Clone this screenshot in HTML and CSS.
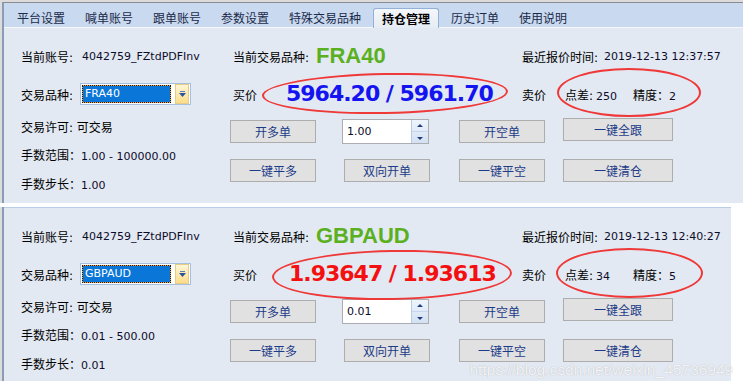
FILE: index.html
```html
<!DOCTYPE html>
<html lang="zh">
<head>
<meta charset="utf-8">
<title>持仓管理</title>
<link rel="stylesheet" href="styles.css">
</head>
<body>
<div class="win">
  <div class="p1">
    <div class="frame">
      <div class="tabs">
        <div class="tab">平台设置</div>
        <div class="tab">喊单账号</div>
        <div class="tab">跟单账号</div>
        <div class="tab">参数设置</div>
        <div class="tab">特殊交易品种</div>
        <div class="tab active">持仓管理</div>
        <div class="tab">历史订单</div>
        <div class="tab">使用说明</div>
      </div>
      <div class="content c-top">
        <div class="row r1">
          <div class="cell"><span class="lbl w61">当前账号:</span><span class="val">4042759_FZtdPDFInv</span></div>
          <div class="cell"><span class="lbl w83">当前交易品种:</span><span class="sym">FRA40</span></div>
          <div class="cell"><span class="lbl w82">最近报价时间:</span><span class="val">2019-12-13 12:37:57</span></div>
        </div>
        <div class="row r2">
          <div class="cell"><span class="lbl w59">交易品种:</span>
            <div class="combo"><div class="sel">FRA40</div><div class="drop"><svg width="7" height="6" viewBox="0 0 7 6"><rect x="1" y="0" width="5" height="1" fill="#5a7fb8"/><path d="M0 2h7L3.5 6z" fill="#2a54a0"/></svg></div></div>
          </div>
          <div class="cell"><span class="lbl w53">买价</span><span class="price blue">5964.20 / 5961.70</span></div>
          <div class="cell"><span class="lbl w43">卖价</span><span class="lbl w68">点差:<span class="val sp">250</span></span><span class="lbl">精度：<span class="val">2</span></span></div>
        </div>
        <div class="lower">
          <div class="info">
            <div>交易许可: 可交易</div>
            <div>手数范围：<span class="val">1.00 - 100000.00</span></div>
            <div>手数步长：<span class="val">1.00</span></div>
          </div>
          <div class="actions">
            <div class="btn">开多单</div>
            <div class="spin"><div class="num">1.00</div><div class="arrows"><span class="up"></span><span class="dn"></span></div></div>
            <div class="btn">开空单</div>
            <div class="btn wide raise">一键全跟</div>
            <div class="btn">一键平多</div>
            <div class="btn">双向开单</div>
            <div class="btn">一键平空</div>
            <div class="btn wide">一键清仓</div>
          </div>
        </div>
      </div>
    </div>
  </div>

  <div class="p2">
    <div class="frame">
      <div class="content c-bot">
        <div class="row r1">
          <div class="cell"><span class="lbl w61">当前账号:</span><span class="val">4042759_FZtdPDFInv</span></div>
          <div class="cell"><span class="lbl w83">当前交易品种:</span><span class="sym">GBPAUD</span></div>
          <div class="cell"><span class="lbl w82">最近报价时间:</span><span class="val">2019-12-13 12:40:27</span></div>
        </div>
        <div class="row r2">
          <div class="cell"><span class="lbl w59">交易品种:</span>
            <div class="combo"><div class="sel">GBPAUD</div><div class="drop"><svg width="7" height="6" viewBox="0 0 7 6"><rect x="1" y="0" width="5" height="1" fill="#5a7fb8"/><path d="M0 2h7L3.5 6z" fill="#2a54a0"/></svg></div></div>
          </div>
          <div class="cell"><span class="lbl w56">买价</span><span class="price red">1.93647 / 1.93613</span></div>
          <div class="cell"><span class="lbl w43">卖价</span><span class="lbl w68">点差:<span class="val sp">34</span></span><span class="lbl">精度：<span class="val">5</span></span></div>
        </div>
        <div class="lower">
          <div class="info">
            <div>交易许可: 可交易</div>
            <div>手数范围：<span class="val">0.01 - 500.00</span></div>
            <div>手数步长：<span class="val">0.01</span></div>
          </div>
          <div class="actions">
            <div class="btn">开多单</div>
            <div class="spin"><div class="num">0.01</div><div class="arrows"><span class="up"></span><span class="dn"></span></div></div>
            <div class="btn">开空单</div>
            <div class="btn wide raise">一键全跟</div>
            <div class="btn">一键平多</div>
            <div class="btn">双向开单</div>
            <div class="btn">一键平空</div>
            <div class="btn wide">一键清仓</div>
          </div>
        </div>
      </div>
    </div>
  </div>

  <div class="ring ring-a"></div>
  <div class="ring ring-b"></div>
  <div class="ring ring-c"></div>
  <div class="ring ring-d"></div>
  <div class="watermark">https://blog.csdn.net/weixin_45736949</div>
</div>
</body>
</html>
```

FILE: styles.css
```css
html, body {
  margin: 0;
  padding: 0;
  background: #ffffff;
}
body {
  font-family: "DejaVu Sans", "Noto Sans CJK SC", sans-serif;
  font-size: 12px;
  color: #000;
}
.win {
  position: relative;
  width: 743px;
  height: 388px;
  overflow: hidden;
  background: #fff;
}

/* outer frames */
.p1 {
  background: #dcdcdc;
  padding: 2px 0 0 2px;
}
.p1 .frame {
  border-top: 1px solid #8c8c8c;
  border-left: 2px solid #8a9cb6;
  background: #c9d9ef;
}
.p2 {
  margin-top: 4px;
  width: 729px;
  padding-left: 2px;
  background: #dcdcdc;
}
.p2 .frame {
  border-left: 2px solid #8a9cb6;
}

/* tabs */
.tabs {
  display: flex;
  align-items: flex-end;
  height: 24px;
  padding-left: 3px;
  font-family: "Noto Sans CJK SC", sans-serif;
  font-size: 12px;
  color: #1b2a4a;
}
.tab {
  height: 19px;
  line-height: 19px;
  padding: 0 10px;
  white-space: nowrap;
}
.tab.active {
  position: relative;
  top: 1px;
  height: 19px;
  padding: 0 8px;
  margin: 0 2px;
  background: linear-gradient(#f4f7fb, #e6ecf4);
  border: 1px solid #93b0d6;
  border-bottom: none;
  border-radius: 3px 3px 0 0;
  font-weight: bold;
  color: #000;
}

/* content area */
.content {
  box-sizing: border-box;
  background: #e3e9f2;
  border-top: 1px solid #f6f8fb;
  padding: 18px 0 0 17px;
  overflow: hidden;
}
.c-top { height: 176px; }
.c-bot {
  height: 174px;
  border-top: 1px solid #b9cde8;
}

.row {
  display: grid;
  grid-template-columns: 212px 289px 1fr;
  align-items: center;
  white-space: nowrap;
}
.cell {
  display: flex;
  align-items: center;
}
.r1 { height: 20px; }
.r2 { height: 22px; margin-top: 17px; }

.lbl {
  font-family: "DejaVu Sans", "Noto Sans CJK SC", sans-serif;
  font-size: 12px;
  display: inline-block;
}
.lbl, .info { letter-spacing: 0; }
.w43 { width: 43px; }
.w53 { width: 53px; }
.w56 { width: 56px; }
.w59 { width: 59px; }
.w61 { width: 61px; }
.w68 { width: 68px; }
.w82 { width: 82px; }
.w83 { width: 83px; }

.val {
  font-family: "DejaVu Sans", sans-serif;
  font-size: 11px;
  color: #0c0c2a;
}
.val.sp { margin-left: 3px; }

.sym {
  font-family: "Liberation Sans", sans-serif;
  font-weight: bold;
  font-size: 22px;
  color: #5bb01f;
  line-height: 20px;
}
.price {
  font-family: "DejaVu Sans", sans-serif;
  font-weight: bold;
  font-size: 22px;
  letter-spacing: -1px;
  line-height: 22px;
}
.price.blue { color: #1414f0; }
.price.red { color: #f41010; }

/* combobox */
.combo {
  box-sizing: border-box;
  width: 111px;
  height: 22px;
  border: 1px solid #a6c0e2;
  background: #fff;
  padding: 1px;
  display: flex;
}
.sel {
  box-sizing: border-box;
  width: 90px;
  height: 18px;
  border: 1px dotted #2a1800;
  background: linear-gradient(#0a76d8, #0a76d8) padding-box, #e9a23a border-box;
  color: #fff;
  font-family: "DejaVu Sans", sans-serif;
  font-size: 11px;
  line-height: 16px;
  padding-left: 2px;
}
.drop {
  box-sizing: border-box;
  width: 14px;
  height: 20px;
  margin: -1px 0 0 4px;
  background: linear-gradient(#fff6d6, #fbdc8a);
  border: 1px solid #e6cd86;
  display: flex;
  align-items: center;
  justify-content: center;
}

/* lower area */
.lower {
  display: grid;
  grid-template-columns: 209px 1fr;
  margin-top: 9px;
}
.info {
  line-height: 28px;
  font-size: 12px;
  white-space: nowrap;
}
.actions {
  padding-top: 5px;
  display: grid;
  grid-template-columns: 114px 115px 104px 110px;
  grid-template-rows: 25px 25px;
  row-gap: 14px;
  align-items: center;
}
.btn {
  box-sizing: border-box;
  width: 86px;
  height: 23px;
  border: 1px solid #adadad;
  background: #e1e1e1;
  color: #1c3b88;
  font-family: "Noto Sans CJK SC", sans-serif;
  font-size: 12px;
  line-height: 21px;
  text-align: center;
}
.btn.wide { width: 110px; }
.btn.raise {
  align-self: start;
  margin-top: -1px;
}

/* spinner */
.spin {
  box-sizing: border-box;
  width: 87px;
  height: 25px;
  margin-left: -2px;
  border: 1px solid #abadb3;
  background: #fff;
  display: flex;
}
.num {
  flex: 1;
  font-family: "DejaVu Sans", sans-serif;
  font-size: 11px;
  color: #0c0c2a;
  line-height: 23px;
  padding-left: 4px;
}
.arrows {
  width: 16px;
  display: flex;
  flex-direction: column;
  border-left: 1px solid #b8cce6;
  background: linear-gradient(#eef4fc, #d3e1f3);
}
.arrows span {
  flex: 1;
  position: relative;
}
.arrows .up { border-bottom: 1px solid #c6d6ec; }
.arrows .up::after,
.arrows .dn::after {
  content: "";
  position: absolute;
  left: 5px;
  width: 0;
  height: 0;
  border-left: 3px solid transparent;
  border-right: 3px solid transparent;
}
.arrows .up::after {
  top: 4px;
  border-bottom: 3px solid #1e3f7c;
}
.arrows .dn::after {
  top: 5px;
  border-top: 3px solid #1e3f7c;
}

/* red hand-drawn rings (overlay) */
.ring {
  position: absolute;
  box-sizing: border-box;
  border: 2px solid #ef3838;
  border-radius: 50%;
  pointer-events: none;
}
.ring-a { left: 262px; top: 73px; width: 246px; height: 41px; transform: rotate(-1deg); }
.ring-b { left: 557px; top: 68px; width: 144px; height: 49px; }
.ring-c { left: 272px; top: 250px; width: 240px; height: 50px; transform: rotate(-1deg); }
.ring-d { left: 556px; top: 248px; width: 147px; height: 50px; }

.watermark {
  position: absolute;
  right: 10px;
  bottom: 9px;
  font-family: "Liberation Sans", sans-serif;
  font-size: 15.5px;
  color: rgba(255, 255, 255, 0.85);
  text-shadow: 0 0 1px rgba(60, 60, 60, 0.35);
  white-space: nowrap;
}
```
